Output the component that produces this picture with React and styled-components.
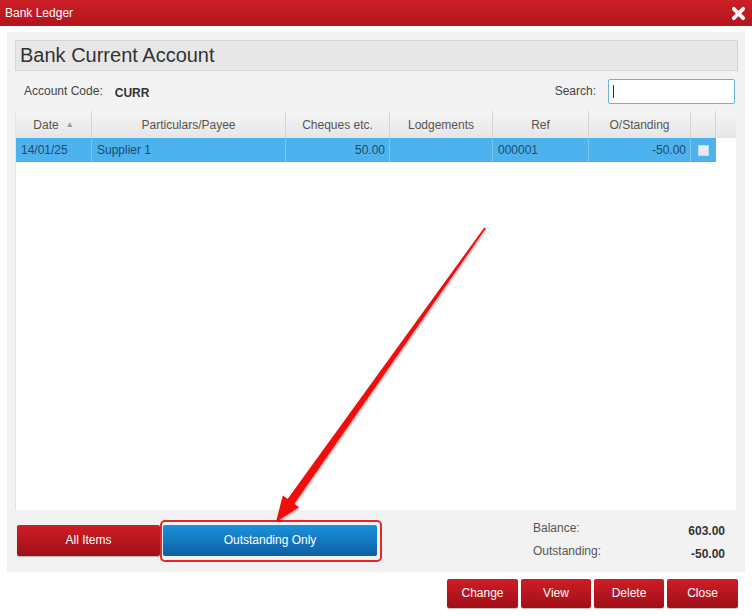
import React from 'react';
import styled, { createGlobalStyle } from 'styled-components';

const GlobalStyle = createGlobalStyle`
  html, body {
    margin: 0;
    padding: 0;
    background: #ffffff;
    font-family: "Liberation Sans", Arial, sans-serif;
  }
`;

const rows = [
  { date: '14/01/25', payee: 'Supplier 1', cheques: '50.00', lodgements: '', ref: '000001', outstanding: '-50.00' },
];

const columns = [
  { key: 'date', label: 'Date', width: 76, sort: true },
  { key: 'payee', label: 'Particulars/Payee', width: 194 },
  { key: 'cheques', label: 'Cheques etc.', width: 104, right: true },
  { key: 'lodgements', label: 'Lodgements', width: 103, right: true },
  { key: 'ref', label: 'Ref', width: 96 },
  { key: 'outstanding', label: 'O/Standing', width: 102, right: true },
];

const App = () => {
  return (
    <>
      <GlobalStyle />
      <Window>
        <TitleBar>
          <span>Bank Ledger</span>
          <CloseIcon viewBox="0 0 16 16">
            <path d="M3 3 L13 13 M13 3 L3 13" stroke="#fff" strokeWidth="4" strokeLinecap="round" />
          </CloseIcon>
        </TitleBar>

        <Panel>
          <Heading>Bank Current Account</Heading>

          <InfoRow>
            <Label>Account Code:</Label>
            <Code>CURR</Code>
            <Spacer />
            <Label>Search:</Label>
            <SearchBox>
              <Caret />
            </SearchBox>
          </InfoRow>

          <Grid>
            <HeadRow>
              {columns.map((c) => (
                <HeadCell key={c.key} $w={c.width}>
                  {c.label}
                  {c.sort && <SortMark>&#9650;</SortMark>}
                </HeadCell>
              ))}
              <HeadCell $w={25} />
              <HeadFill />
            </HeadRow>
            {rows.map((r) => (
              <DataRow key={r.ref}>
                {columns.map((c) => (
                  <DataCell key={c.key} $w={c.width} $right={c.right}>
                    {r[c.key]}
                  </DataCell>
                ))}
                <DataCell $w={25} $last>
                  <Tick />
                </DataCell>
              </DataRow>
            ))}
          </Grid>

          <BottomBar>
            <RedButton $w={143}>All Items</RedButton>
            <Highlight>
              <BlueButton>Outstanding Only</BlueButton>
            </Highlight>
            <Spacer />
            <Totals>
              <TotalLabel>Balance:</TotalLabel>
              <TotalValue>603.00</TotalValue>
              <TotalLabel>Outstanding:</TotalLabel>
              <TotalValue>-50.00</TotalValue>
            </Totals>
          </BottomBar>
        </Panel>

        <Footer>
          <RedButton $w={71} $h={29}>Change</RedButton>
          <RedButton $w={70} $h={29}>View</RedButton>
          <RedButton $w={70} $h={29}>Delete</RedButton>
          <RedButton $w={71} $h={29}>Close</RedButton>
        </Footer>

        <Arrow viewBox="0 0 752 616">
          <defs>
            <filter id="shadow" x="-10%" y="-10%" width="120%" height="120%">
              <feDropShadow dx="1" dy="1" stdDeviation="1.2" floodColor="#000" floodOpacity="0.35" />
            </filter>
          </defs>
          <polygon
            filter="url(#shadow)"
            fill="#f20d0d"
            points="485.7,228.5 294.3,503.8 299,507.2 276,522 282.8,495.4 287.6,499 484.3,227.5"
          />
        </Arrow>
      </Window>
    </>
  );
};

export default App;

const Window = styled.div`
  position: relative;
  width: 752px;
  height: 616px;
  overflow: hidden;
  background: #ffffff;
`;

const TitleBar = styled.div`
  height: 26px;
  display: flex;
  align-items: center;
  justify-content: space-between;
  padding: 0 5px 0 5px;
  background: linear-gradient(#cc1f27, #b3141c);
  color: #fff;
  font-size: 12px;
`;

const CloseIcon = styled.svg`
  width: 15px;
  height: 15px;
  margin-right: 1px;
`;

const Panel = styled.div`
  margin: 6px 7px 0 7px;
  width: 738px;
  height: 540px;
  box-sizing: border-box;
  padding: 8px 7px 0 8px;
  background: #f2f2f2;
  display: flex;
  flex-direction: column;
`;

const Heading = styled.div`
  height: 31px;
  box-sizing: border-box;
  border: 1px solid #d6d6d6;
  background: #e7e7e7;
  color: #333;
  font-size: 20px;
  line-height: 29px;
  padding-left: 4px;
`;

const InfoRow = styled.div`
  height: 40px;
  display: flex;
  align-items: center;
  padding: 0 3px 0 9px;
  font-size: 12px;
  color: #333;
`;

const Label = styled.span`
  color: #444;
`;

const Code = styled.span`
  font-weight: bold;
  margin-left: 12px;
  margin-top: 3px;
  color: #333;
`;

const Spacer = styled.div`
  flex: 1;
`;

const SearchBox = styled.div`
  width: 127px;
  height: 25px;
  box-sizing: border-box;
  margin-left: 12px;
  background: #fff;
  border: 1px solid #64b5d9;
  border-radius: 2px;
  display: flex;
  align-items: center;
  padding-left: 4px;
`;

const Caret = styled.div`
  width: 1px;
  height: 13px;
  background: #333;
`;

const Grid = styled.div`
  width: 721px;
  height: 399px;
  background: #ffffff;
  box-sizing: border-box;
  border-left: 1px solid #e2e2e2;
`;

const HeadRow = styled.div`
  display: flex;
  height: 27px;
  background: linear-gradient(#f4f4f4, #e6e6e6);
`;

const HeadCell = styled.div`
  width: ${(p) => p.$w}px;
  flex-shrink: 0;
  box-sizing: border-box;
  border-right: 1px solid #d4d4d4;
  display: flex;
  align-items: center;
  justify-content: center;
  font-size: 12px;
  color: #555;
`;

const HeadFill = styled.div`
  flex: 1;
`;

const SortMark = styled.span`
  font-size: 8px;
  color: #999;
  margin-left: 7px;
`;

const DataRow = styled.div`
  display: flex;
  height: 24px;
  width: 700px;
  background: #4cb3ee;
`;

const DataCell = styled.div`
  width: ${(p) => p.$w}px;
  flex-shrink: 0;
  box-sizing: border-box;
  border-right: ${(p) => (p.$last ? 'none' : '1px solid #7dc7f0')};
  display: flex;
  align-items: center;
  justify-content: ${(p) => (p.$right ? 'flex-end' : 'flex-start')};
  padding: 0 4px 0 5px;
  font-size: 12px;
  color: #1f4a6b;
`;

const Tick = styled.div`
  width: 11px;
  height: 11px;
  margin-left: 2px;
  box-sizing: border-box;
  border: 1px solid #c5d9e6;
  background: linear-gradient(#f2f4f6, #dfe6ec);
`;

const BottomBar = styled.div`
  flex: 1;
  display: flex;
  align-items: flex-start;
  padding: 15px 13px 0 2px;
`;

const RedButton = styled.div`
  width: ${(p) => p.$w}px;
  height: ${(p) => p.$h || 31}px;
  box-sizing: border-box;
  display: flex;
  align-items: center;
  justify-content: center;
  padding-bottom: 2px;
  border-radius: 2px;
  background: linear-gradient(#cf1d26, #9f0f17);
  color: #fff;
  font-size: 12px;
  box-shadow: 0 1px 1px rgba(0, 0, 0, 0.25);
`;

const Highlight = styled.div`
  margin: -5px 0 0 0;
  padding: 3px 3px 4px 1px;
  border: 2px solid #e3262c;
  border-radius: 5px;
`;

const BlueButton = styled.div`
  width: 214px;
  height: 31px;
  box-sizing: border-box;
  display: flex;
  align-items: center;
  justify-content: center;
  padding-bottom: 2px;
  border-radius: 2px;
  background: linear-gradient(#1b92dc, #0d5fa3);
  color: #fff;
  font-size: 12px;
`;

const Totals = styled.div`
  display: grid;
  grid-template-columns: 100px 92px;
  row-gap: 6px;
  margin-top: -4px;
  font-size: 12px;
`;

const TotalLabel = styled.div`
  color: #555;
`;

const TotalValue = styled.div`
  text-align: right;
  font-weight: bold;
  color: #333;
  margin-top: 3px;
`;

const Footer = styled.div`
  display: flex;
  justify-content: flex-end;
  gap: 3px;
  padding: 7px 14px 0 0;
`;

const Arrow = styled.svg`
  position: absolute;
  left: 0;
  top: 0;
  width: 752px;
  height: 616px;
  pointer-events: none;
`;
